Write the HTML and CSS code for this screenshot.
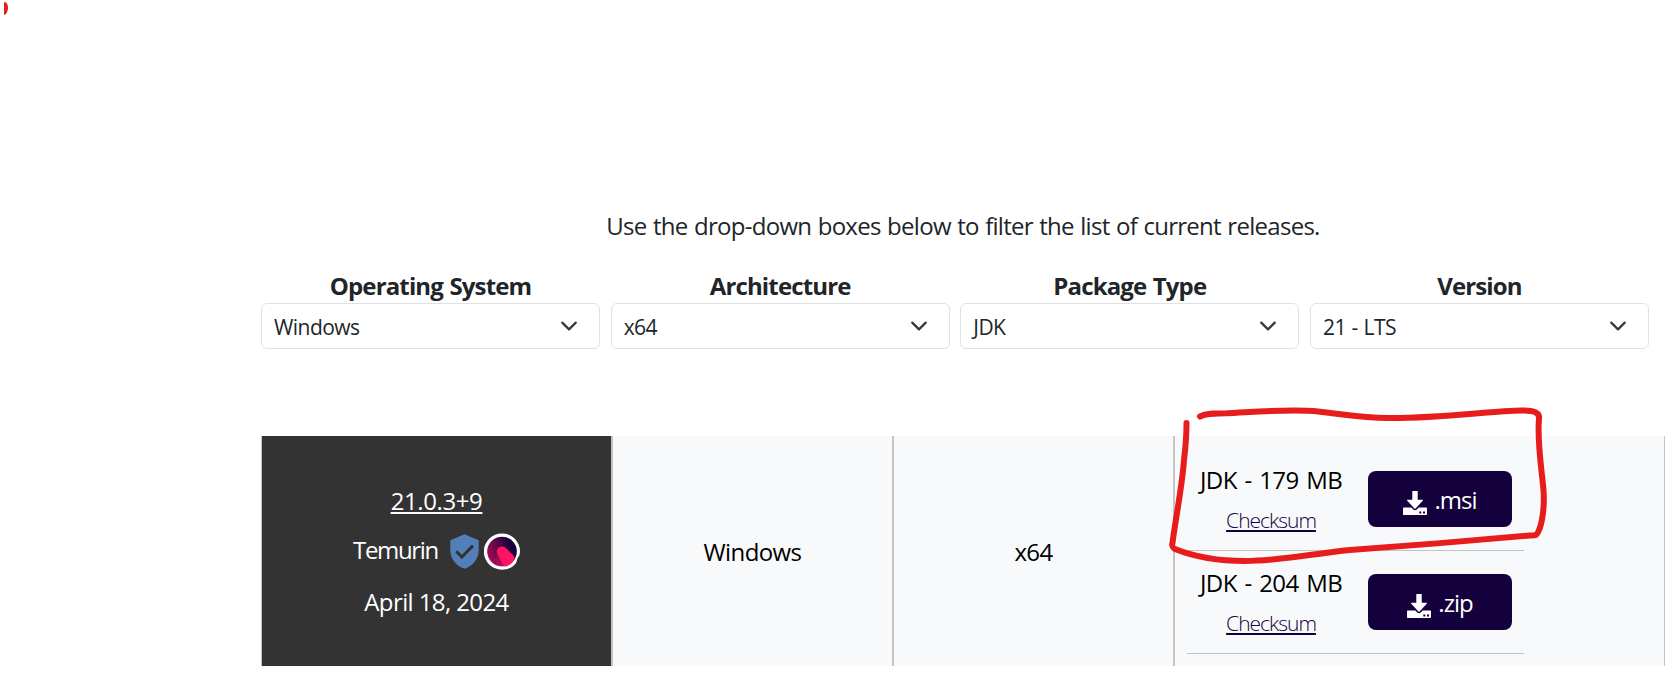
FILE: index.html
```html
<!DOCTYPE html>
<html lang="en">
<head>
<meta charset="utf-8">
<title>Releases</title>
<link rel="stylesheet" href="styles.css">
</head>
<body>
<svg width="0" height="0" class="defs">
  <defs>
    <linearGradient id="logo-fill" x1="1" y1="0.3" x2="0" y2="0.7">
      <stop offset="0.15" stop-color="#14003c"/>
      <stop offset="1" stop-color="#a80c55"/>
    </linearGradient>
    <linearGradient id="logo-glow" x1="0" y1="0" x2="1" y2="0">
      <stop offset="0" stop-color="#ff1464" stop-opacity="0"/>
      <stop offset="1" stop-color="#ff1464"/>
    </linearGradient>
    <symbol id="chevron" viewBox="0 0 16 16">
      <path fill="none" stroke="#343a40" stroke-linecap="round" stroke-linejoin="round" stroke-width="2" d="m2 5 6 6 6-6"/>
    </symbol>
    <symbol id="download" viewBox="0 0 24 24">
      <path fill="#fff" d="M9.300 0h5.400v8.800h4.600c.6 0 .8.6.4 1l-7.100 7.600c-.3.3-.9.3-1.200 0L4.300 9.800c-.4-.4-.2-1 .4-1h4.600z"/>
      <path fill="#fff" fill-rule="evenodd" d="M1 16.400h7.300l1.900 2c1 1 2.600 1 3.600 0l1.900-2H23c.6 0 1 .4 1 1V23c0 .6-.4 1-1 1H1c-.6 0-1-.4-1-1v-5.600c0-.6.4-1 1-1zM16.300 20.500v2h2v-2zM20 20.500v2h2v-2z"/>
    </symbol>
  </defs>
</svg>
<main class="page">
  <p class="intro">Use the drop-down boxes below to filter the list of current releases.</p>
  <div class="filters">
    <div class="filter"><label>Operating System</label><div class="select"><span>Windows</span><svg class="chev"><use href="#chevron"/></svg></div></div>
    <div class="filter"><label>Architecture</label><div class="select"><span>x64</span><svg class="chev"><use href="#chevron"/></svg></div></div>
    <div class="filter"><label>Package Type</label><div class="select"><span>JDK</span><svg class="chev"><use href="#chevron"/></svg></div></div>
    <div class="filter"><label>Version</label><div class="select"><span>21 - LTS</span><svg class="chev"><use href="#chevron"/></svg></div></div>
  </div>
  <div class="release">
    <div class="cell release-info">
      <a class="version">21.0.3+9</a>
      <div class="vendor"><span class="vendor-name">Temurin</span>
        <svg class="shield" viewBox="0 0 29 35"><path fill="#537fb9" d="M14.500.3 28.700 6.300V16c0 8.600-6 16.200-14.200 18.700C6.300 32.200.3 24.600.3 16V6.300z"/><path fill="none" stroke="#333" stroke-width="3" d="m6.300 17.200 5.500 5.800L23 11.600"/></svg>
        <svg class="logo" viewBox="0 0 36 37"><path fill="#fff" d="M18 .4A18 18 0 0 1 36 18.500C36 21.500 35 23.500 33.300 25.500C33 32 26 36.700 18 36.700A18 18 0 0 1 18 .4z"/><circle cx="18" cy="18.500" r="14.800" fill="url(#logo-fill)"/><path fill="url(#logo-glow)" d="M8 29.500 14.500 21 24 24V33C17 34.500 11 33 8 29.500z" opacity=".8"/><path fill="#ff1464" d="M14.200 22.300a5 5 0 0 1 7.600-7.200l8 7.600c1.400 1.800.8 2.600.3 4.300-2.800 4.800-7 6.400-10.100 6.300z"/></svg>
      </div>
      <div class="date">April 18, 2024</div>
    </div>
    <div class="cell plain">Windows</div>
    <div class="cell plain">x64</div>
    <div class="cell downloads">
      <div class="download"><div class="file"><span class="size">JDK - 179 MB</span><a class="checksum">Checksum</a></div><a class="button"><svg class="icon"><use href="#download"/></svg><span>.msi</span></a></div>
      <div class="download"><div class="file"><span class="size">JDK - 204 MB</span><a class="checksum">Checksum</a></div><a class="button"><svg class="icon"><use href="#download"/></svg><span>.zip</span></a></div>
    </div>
  </div>
</main>
<svg class="ink" viewBox="0 0 1675 677">
  <path class="dot" d="M4 2C7 2 8 5 8 8S6 15 4 15z"/>
  <path d="M1200 416.500C1206 413.500 1213 413.300 1227 413.300C1250 412.300 1290 408.500 1318 411.500C1342 414 1362 418 1388 418C1440 418.500 1490 411 1522 410.500C1534 410.300 1540 412.500 1539 419C1537 440 1541 464 1543.500 490C1545 510 1541 526 1539 530C1537 535.500 1536 535.500 1530 535.500C1480 540 1400 546.500 1350 550C1310 554 1280 561 1245 561C1211 561 1190 555 1175 549C1172 547 1171.500 546 1172.500 543C1175 522 1182 488 1184 460C1186 444 1186.500 433 1186.500 423"/>
</svg>
</body>
</html>
```
FILE: styles.css
```css
* { box-sizing: border-box; }
body { margin: 0; background: #fff; color: #212529; font-family: "Open Sans", sans-serif; font-size: 24px; width: 1675px; height: 677px; overflow: hidden; position: relative; }
p { margin: 0; }
.defs { display: block; }
.page { padding: 208px 10px 0 261px; }
.intro { width: 1404px; text-align: center; line-height: 36px; letter-spacing: -0.72px; word-spacing: 0.9px; }
.filters { display: grid; grid-template-columns: repeat(4, 339px); justify-content: space-between; width: 1388px; margin-top: 26px; }
.filter label { display: block; text-align: center; font-weight: 700; line-height: 32px; letter-spacing: -0.85px; word-spacing: 1px; }
.select { display: flex; align-items: center; justify-content: space-between; height: 46px; margin-top: 1px; padding: 1px 21px 0 12px; border: 1px solid #dee2e6; border-radius: 6px; font-size: 21px; letter-spacing: -0.55px; word-spacing: 0.8px; }
.chev { width: 18px; height: 18px; margin-bottom: 1px; }
.release { display: grid; grid-template-columns: 351px 281px 281px 490px; width: 1404px; height: 230px; margin-top: 87px; background: #f8f9fb; border-left: 1px solid #c4c4c4; color: #000; letter-spacing: -0.6px; }
.cell { border-right: 2px solid #c4c4c4; }
.release-info { background: #333; color: #fff; display: flex; flex-direction: column; align-items: center; padding-top: 47px; line-height: 36px; }
.version, .checksum { text-decoration: underline; text-decoration-thickness: 2px; text-underline-offset: 2px; text-decoration-skip-ink: none; }
.version { letter-spacing: -0.4px; }
.vendor { display: flex; align-items: center; margin-top: 12px; height: 36px; }
.vendor-name { letter-spacing: -1.35px; padding-top: 1px; }
.shield { width: 29px; height: 35px; margin: 5px 0 0 12px; }
.logo { width: 36px; height: 37px; margin: 5px 0 0 5px; }
.date { margin-top: 17px; }
.plain { display: flex; align-items: center; justify-content: center; }
.downloads { padding: 12px 0 0 12px; border-right-width: 1px; }
.download { display: flex; width: 337px; height: 103px; border-bottom: 1px solid #c4c4c4; padding: 14px 12px 0 13px; justify-content: space-between; }
.file { display: flex; flex-direction: column; align-items: center; gap: 4px; line-height: 36px; }
.size { letter-spacing: -0.6px; word-spacing: 2px; }
.checksum { font-weight: 300; font-size: 21px; letter-spacing: -1px; color: #14003c; }
.button { display: flex; align-items: center; justify-content: center; gap: 7px; width: 144px; height: 56px; margin-top: 9px; padding-top: 1px; background: #14003c; color: #fff; border-radius: 8px; letter-spacing: -1px; }
.icon { width: 24px; height: 24px; margin-top: 7px; }
.ink { position: absolute; left: 0; top: 0; width: 1675px; height: 677px; fill: none; stroke: #e71c1c; stroke-width: 6; stroke-linecap: round; stroke-linejoin: round; }
.dot { fill: #e71c1c; stroke: none; }
```
